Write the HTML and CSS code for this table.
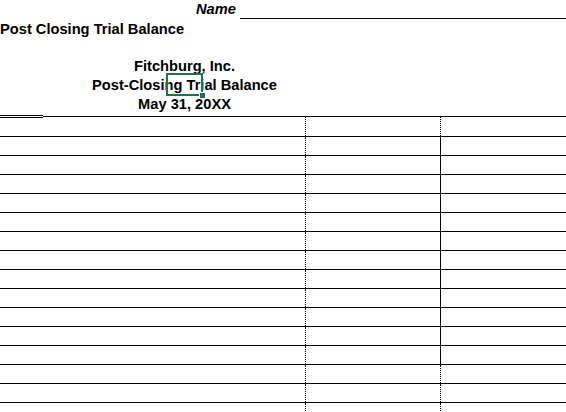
FILE: index.html
```html
<!DOCTYPE html>
<html>
<head>
<meta charset="utf-8">
<link rel="stylesheet" href="styles.css">
</head>
<body>
<div class="sheet">
  <div class="name-row">
    <span class="name-label">Name</span>
    <span class="name-line"></span>
  </div>
  <div class="title">Post Closing Trial Balance</div>
  <div class="company">
    <div class="company-line">Fitchburg, Inc.</div>
    <div class="company-line">Post-Closing Trial Balance</div>
    <div class="company-line">May 31, 20XX</div>
  </div>
  <div class="ledger">
    <div class="row first"><div class="c1"><span class="dbl"></span></div><div class="c2"></div><div class="c3"></div></div>
    <div class="row solid"><div class="c1"></div><div class="c2"></div><div class="c3"></div></div>
    <div class="row solid"><div class="c1"></div><div class="c2"></div><div class="c3"></div></div>
    <div class="row solid"><div class="c1"></div><div class="c2"></div><div class="c3"></div></div>
    <div class="row solid"><div class="c1"></div><div class="c2"></div><div class="c3"></div></div>
    <div class="row solid"><div class="c1"></div><div class="c2"></div><div class="c3"></div></div>
    <div class="row solid"><div class="c1"></div><div class="c2"></div><div class="c3"></div></div>
    <div class="row solid"><div class="c1"></div><div class="c2"></div><div class="c3"></div></div>
    <div class="row solid"><div class="c1"></div><div class="c2"></div><div class="c3"></div></div>
    <div class="row solid"><div class="c1"></div><div class="c2"></div><div class="c3"></div></div>
    <div class="row solid"><div class="c1"></div><div class="c2"></div><div class="c3"></div></div>
    <div class="row solid"><div class="c1"></div><div class="c2"></div><div class="c3"></div></div>
    <div class="row solid"><div class="c1"></div><div class="c2"></div><div class="c3"></div></div>
    <div class="row"><div class="c1"></div><div class="c2"></div><div class="c3"></div></div>
    <div class="row"><div class="c1"></div><div class="c2"></div><div class="c3"></div></div>
    <div class="row"><div class="c1"></div><div class="c2"></div><div class="c3"></div></div>
  </div>
  <div class="selection"><span class="handle"></span></div>
</div>
</body>
</html>
```
FILE: styles.css
```css
html, body {
  margin: 0;
  padding: 0;
  background: #fff;
  overflow: hidden;
}
.sheet {
  position: relative;
  width: 566px;
  height: 412px;
  overflow: hidden;
  font-family: "Liberation Sans", Arial, sans-serif;
  font-size: 14.67px;
  font-weight: bold;
  color: #000;
}
.name-row {
  display: flex;
  align-items: flex-start;
  height: 19px;
  line-height: 19px;
  padding-left: 196px;
}
.name-label {
  font-style: italic;
}
.name-line {
  flex: 1;
  height: 18px;
  margin-left: 4px;
  border-bottom: 1px solid #000;
}
.title {
  height: 20px;
  line-height: 20px;
}
.company {
  width: 369px;
  margin-top: 18px;
  text-align: center;
}
.company-line {
  height: 19px;
  line-height: 19px;
}
.ledger {
  margin-top: 2px;
  border-top: 1px solid #000;
}
.row {
  display: grid;
  grid-template-columns: 306px 135px 1fr;
  height: 18px;
  border-bottom: 1px solid #000;
}
.row.first {
  height: 19px;
}
.c1 {
  position: relative;
  border-right: 1px dotted #000;
}
.c2 {
  border-right: 1px dotted #000;
}
.row.solid .c2 {
  border-right: 1px solid #000;
}
.dbl {
  position: absolute;
  left: 0;
  top: -2px;
  width: 43px;
  height: 3px;
  background: #fff;
  border-top: 1px solid #000;
  border-bottom: 1px solid #000;
  box-sizing: border-box;
}
.selection {
  position: absolute;
  left: 166px;
  top: 73px;
  width: 33px;
  height: 19px;
  border: 2px solid #217346;
}
.handle {
  position: absolute;
  right: -5px;
  bottom: -5px;
  width: 5px;
  height: 5px;
  background: #217346;
  border: 1px solid #fff;
}
```
